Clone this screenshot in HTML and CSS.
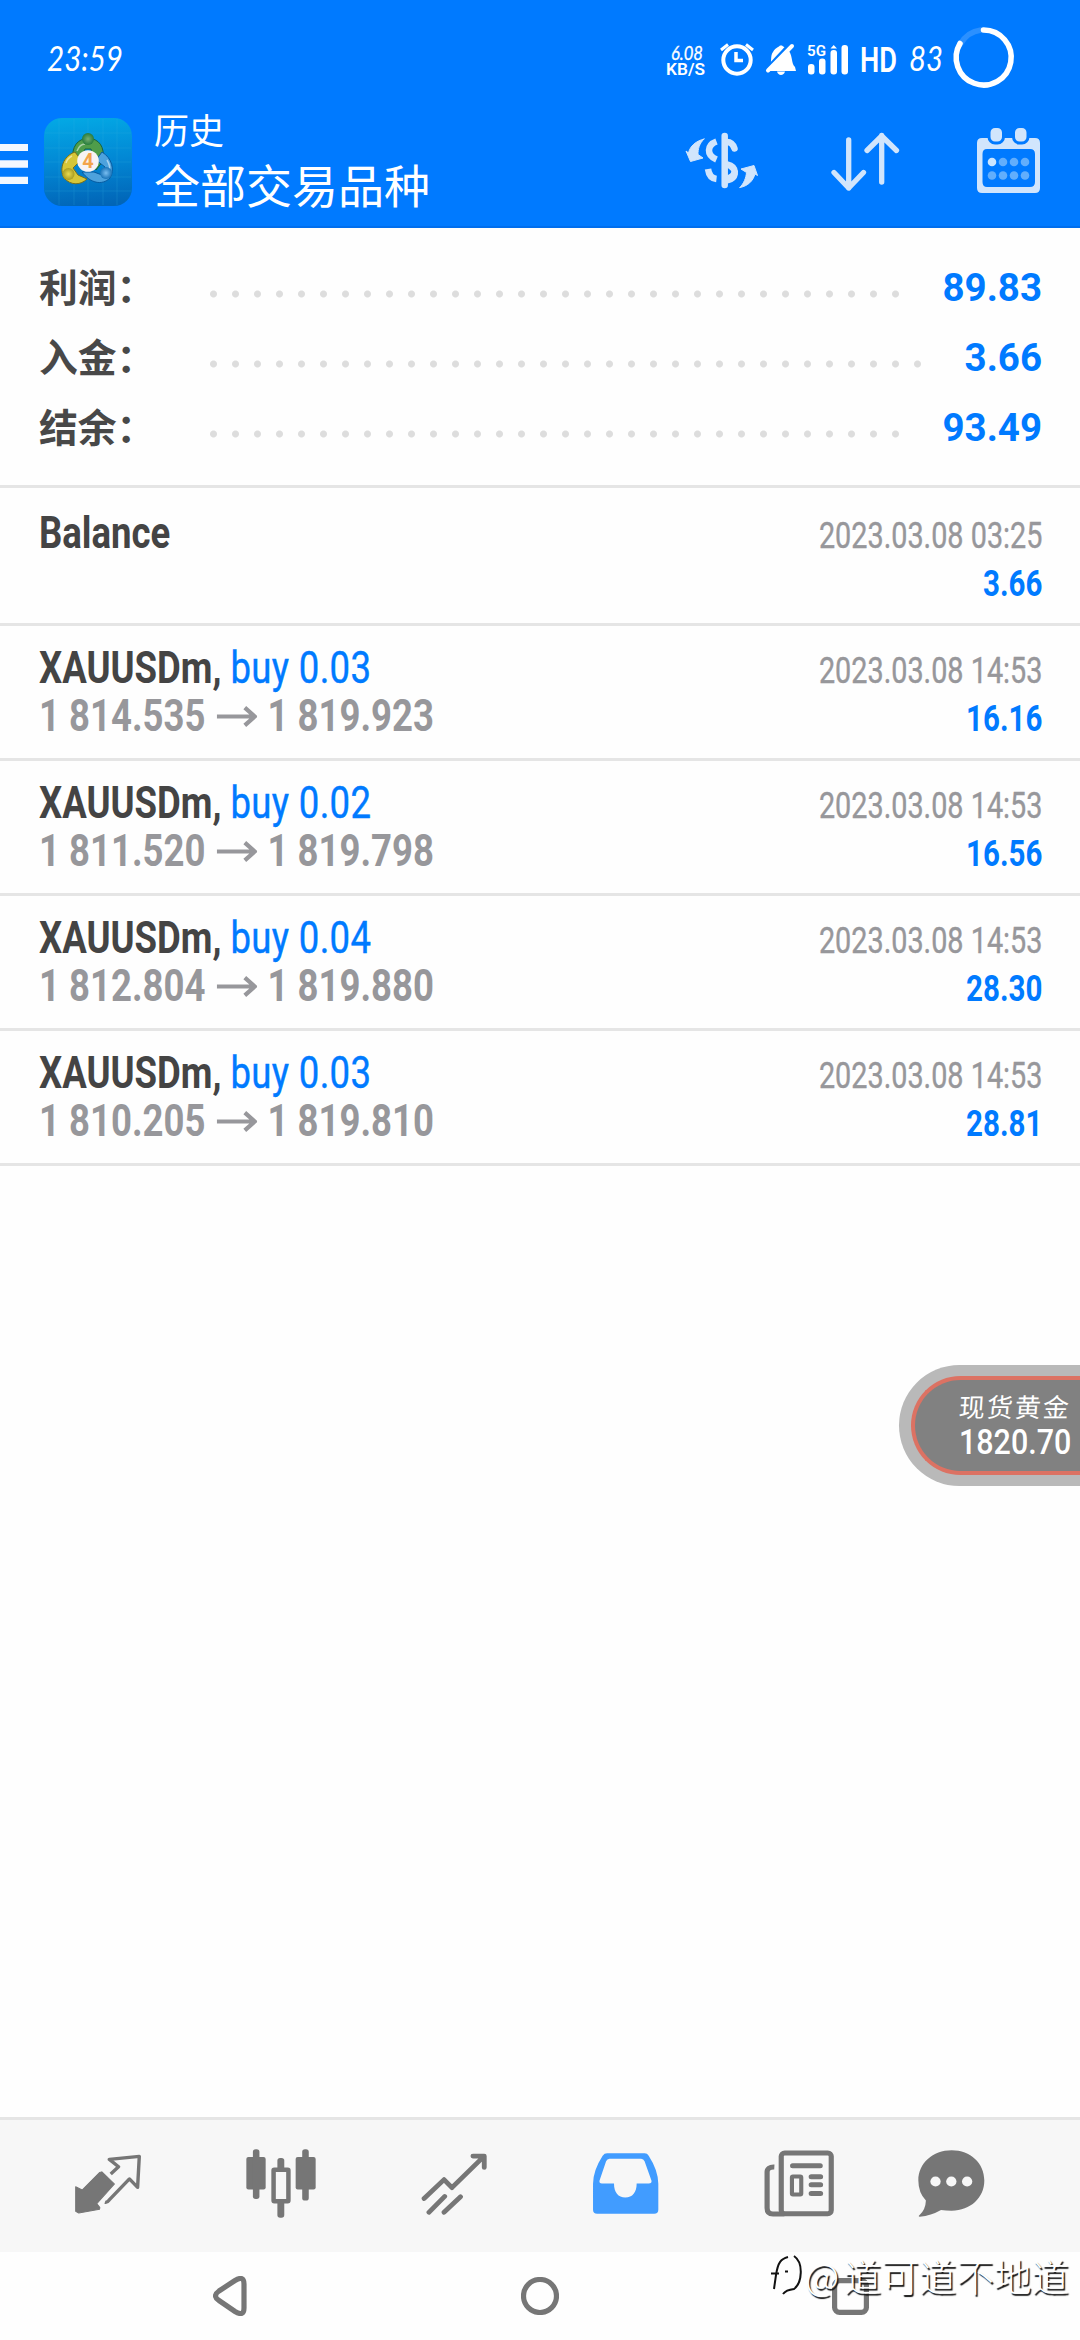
FILE: index.html
```html
<!DOCTYPE html>
<html lang="zh-CN">
<head>
<meta charset="utf-8">
<title>历史</title>
<link rel="stylesheet" href="styles.css">
</head>
<body>
<svg class="defs" width="0" height="0">
  <symbol id="arrow" viewBox="0 0 39 20" preserveAspectRatio="none"><path d="M0 10H37M27 1.500L36.500 10L27 18.500" fill="none" stroke="currentColor" stroke-width="4"/></symbol>
</svg>
<header class="top">
  <div class="status">
    <svg width="1080" height="100" viewBox="0 0 1080 100" fill="#fff">
      <g class="hand">
        <text x="47" y="71" font-size="35" textLength="76" lengthAdjust="spacingAndGlyphs">23:59</text>
        <text x="671" y="60" font-size="19" textLength="32" lengthAdjust="spacingAndGlyphs" stroke="#fff" stroke-width=".3">6.08</text>
        <text x="909" y="71" font-size="35" textLength="34" lengthAdjust="spacingAndGlyphs">83</text>
      </g>
      <g class="label">
        <text x="666" y="75" font-size="17" textLength="39" lengthAdjust="spacingAndGlyphs">KB/S</text>
        <text x="807" y="56" font-size="15" textLength="19" lengthAdjust="spacingAndGlyphs">5G</text>
        <text x="860" y="72" font-size="35" textLength="37" lengthAdjust="spacingAndGlyphs">HD</text>
      </g>
      <g fill="none" stroke="#fff" stroke-width="4">
        <circle cx="737" cy="60" r="13.700"/>
        <path d="M736 52V60.500H743" stroke-width="3.500"/>
        <path d="M721 50L728 44.500M753 50L746 44.500" stroke-width="3"/>
      </g>
      <path d="M770 66C772 62 770 56 773 52C776 47 779 47 780 45.500H782C783 47 787 48 789 51C793 57 791 63 795 67L796 71H768ZM777 71.500H785C784 76 778 76 777 71.500Z"/>
      <path d="M764 72L791 43" stroke="#007aff" stroke-width="4"/>
      <path d="M768 70.500L792 46" stroke="#fff" stroke-width="4" stroke-linecap="round"/>
      <rect x="808" y="64" width="6.500" height="10.500" rx="3"/><rect x="819" y="58.500" width="6.500" height="16" rx="3"/><rect x="830.500" y="50" width="6.500" height="24.500" rx="3"/><rect x="841.500" y="45" width="6.500" height="29.500" rx="3"/>
      <path d="M830.500 48.500L833.700 45L837 48.500Z"/>
      <g fill="none" stroke-width="5.500" stroke-linecap="round"><path d="M960.500 44A27.500 27.500 0 0 1 981 30" stroke="#2b90ff"/><path d="M983.500 30A27.500 27.500 0 1 1 960 43.500" stroke="#fff"/></g>
    </svg>
  </div>
  <div class="bar">
    <svg class="menu" width="28" height="40" viewBox="0 0 28 40" fill="#f3f8ff"><path d="M0 0H28V7H0ZM0 16.300H28V23.700H0ZM0 32.700H28V40H0Z"/></svg>
    <svg class="logo" width="88" height="88" viewBox="0 0 88 88">
      <defs>
        <linearGradient id="lg" x1=".45" y1="0" x2=".55" y2="1"><stop offset="0" stop-color="#03a7e4"/><stop offset=".5" stop-color="#0287d4"/><stop offset="1" stop-color="#0165b7"/></linearGradient>
        <radialGradient id="gr"><stop offset="0" stop-color="#77ae70"/><stop offset="1" stop-color="#267b3d"/></radialGradient>
        <radialGradient id="ye"><stop offset="0" stop-color="#eadb50"/><stop offset="1" stop-color="#a89c22"/></radialGradient>
        <radialGradient id="bl"><stop offset="0" stop-color="#79bdf0"/><stop offset="1" stop-color="#1973b8"/></radialGradient>
      </defs>
      <rect width="88" height="88" rx="18" fill="url(#lg)"/>
      <path d="M15 1V87M30 1V87M44 1V87M59 1V87M73 1V87M1 15H87M1 30H87M1 44H87M1 59H87M1 73H87" stroke="#39b6e3" stroke-width=".7" opacity=".3"/>
      <g stroke-width="1">
        <path d="M29 43C27 28 34 21 44 20C55 21 61 28 59 43L52 52L47 31H41L36 42Z" fill="#4f9d4a" stroke="#19623c"/>
        <path d="M31 34C19 38 15 51 20 60C27 68 37 67 43 61L34 57L29 50L37 42Z" fill="#d6c638" stroke="#776f1a"/>
        <path d="M58 34C68 40 71 52 66 60C58 68 46 65 38 54H50L58 57L61 49L52 42Z" fill="#4da2dd" stroke="#075ba1"/>
      </g>
      <path d="M33 33C35 28 38 26 41 26M22 45C23 41 26 39 28 38M63 42C66 47 66 50 65 52" fill="none" stroke="#fff" stroke-width="1.500" opacity=".5"/>
      <circle cx="44" cy="21" r="6" fill="url(#gr)"/><circle cx="24.500" cy="56" r="6" fill="url(#ye)"/><circle cx="62" cy="55" r="6" fill="url(#bl)"/>
      <circle cx="44" cy="43" r="10.800" fill="#f7f3f4"/>
      <text class="four" x="44" y="50" text-anchor="middle">4</text>
    </svg>
    <div class="titles"><div class="sub">历史</div><div class="main">全部交易品种</div></div>
    <svg class="actions" width="360" height="68" viewBox="682 126 360 68" fill="none" stroke="#d1e5fc" stroke-linecap="round" stroke-linejoin="round">
      <g stroke-width="6.500">
        <path d="M724.700 136V185"/><path d="M727 142C731 142 733 144 734.500 148.500M727 164.500C737 167 737 176 727 178.500M731 166.500C737 170 736 178 728 180"/>
        <path d="M716.500 141.500C707 145 706 155 716.500 159.500M708 169C709 176 712 178.500 716.500 179" stroke-linecap="butt"/>
      </g>
      <path d="M704 139C696 141 690 146 688.500 153L686 151L690.500 161.500L703 158L698 154.500C698 149 699 144 704 139ZM740 187.500C748 186 753 181 755 174L757.500 175.500L754 165.500L741 169L746.500 172.500C746 178 744 183 740 187.500Z" fill="#d1e5fc" stroke-width="1"/>
      <path d="M848.700 140V188M834 172.500L848.700 188L863.500 172.500M881.700 182V135.500M867 150.500L881.700 136L896.500 150.500" stroke-width="5.300"/>
      <path d="M982 138H1035Q1040 138 1040 143V188Q1040 193 1035 193H982Q977 193 977 188V143Q977 138 982 138ZM987 149Q982.500 149 982.500 154V182Q982.500 187 987 187H1030Q1035 187 1035 182V154Q1035 149 1030 149Z" fill="#d1e5fc" fill-rule="evenodd" stroke="none"/>
      <g fill="#d1e5fc" stroke="#007aff" stroke-width="3"><rect x="989" y="126.500" width="14.500" height="16.500" rx="6"/><rect x="1013.500" y="126.500" width="14.500" height="16.500" rx="6"/></g>
      <g stroke="none" fill="#62aefc"><circle cx="992" cy="162" r="4.300" fill="#cbe5ff"/><circle cx="1003" cy="162" r="4.300"/><circle cx="1014" cy="162" r="4.300"/><circle cx="1025" cy="162" r="4.300"/><circle cx="992" cy="175.500" r="4.300"/><circle cx="1003" cy="175.500" r="4.300"/><circle cx="1014" cy="175.500" r="4.300"/><circle cx="1025" cy="175.500" r="4.300"/></g>
    </svg>
  </div>
</header>
<section class="summary">
  <div class="total"><span class="name">利润：</span><span class="dots"></span><b>89.83</b></div>
  <div class="total"><span class="name">入金：</span><span class="dots long"></span><b>3.66</b></div>
  <div class="total"><span class="name">结余：</span><span class="dots"></span><b>93.49</b></div>
</section>
<main>
  <div class="deal first"><div class="left"><div><b>Balance</b></div></div><div class="right"><div class="date">2023.03.08 03:25</div><div class="profit">3.66</div></div></div>
  <div class="deal"><div class="left"><div><b>XAUUSDm,</b> <span>buy 0.03</span></div><div class="price">1 814.535<svg><use href="#arrow"/></svg>1 819.923</div></div><div class="right"><div class="date">2023.03.08 14:53</div><div class="profit">16.16</div></div></div>
  <div class="deal"><div class="left"><div><b>XAUUSDm,</b> <span>buy 0.02</span></div><div class="price">1 811.520<svg><use href="#arrow"/></svg>1 819.798</div></div><div class="right"><div class="date">2023.03.08 14:53</div><div class="profit">16.56</div></div></div>
  <div class="deal"><div class="left"><div><b>XAUUSDm,</b> <span>buy 0.04</span></div><div class="price">1 812.804<svg><use href="#arrow"/></svg>1 819.880</div></div><div class="right"><div class="date">2023.03.08 14:53</div><div class="profit">28.30</div></div></div>
  <div class="deal"><div class="left"><div><b>XAUUSDm,</b> <span>buy 0.03</span></div><div class="price">1 810.205<svg><use href="#arrow"/></svg>1 819.810</div></div><div class="right"><div class="date">2023.03.08 14:53</div><div class="profit">28.81</div></div></div>
</main>
<aside class="float"><div class="pill"><div class="metal">现货黄金</div><div class="quote">1820.70</div></div></aside>
<nav class="tabs">
  <svg width="66" height="60" viewBox="218 164 194 178" preserveAspectRatio="none"><path d="M297 217L334 253L282 311L291 323L290 328L229 339L220 334V261L239 271L290 219Z" fill="#767676" stroke="#767676" stroke-width="3" stroke-linejoin="round"/><path d="M323 223L346 202L319 180L407 171L402 263L378 238L318 301Q312 309 306 307" fill="none" stroke="#767676" stroke-width="10" stroke-linejoin="round"/></svg>
  <svg width="70" height="69" viewBox="715 149 203 206" preserveAspectRatio="none" fill="#767676"><rect x="716" y="173" width="56" height="97" rx="6"/><rect x="735" y="150" width="19" height="148" rx="8"/><rect x="859" y="173" width="58" height="97" rx="6"/><rect x="878" y="150" width="19" height="153" rx="8"/><rect x="806" y="176" width="20" height="178" rx="8"/><rect x="795" y="211" width="43" height="94" rx="2" fill="#f7f7f7" stroke="#767676" stroke-width="13"/></svg>
  <svg width="66" height="62" viewBox="1222 157 192 184" preserveAspectRatio="none" fill="none" stroke="#767676" stroke-width="14" stroke-linecap="round" stroke-linejoin="round"><path d="M1231 292L1289 236L1312 260L1405 167M1373 166H1406V200M1245 333L1291 286M1289 333L1337 287"/></svg>
  <svg width="67" height="61" viewBox="157 157 195 184" preserveAspectRatio="none"><path fill="#419cff" fill-rule="evenodd" d="M201 158H310Q318 158 322 165Q350 210 350 250V328Q350 340 338 340H172Q160 340 160 328V250Q160 210 188 165Q193 158 201 158ZM208 174Q201 174 198 182L179 240Q177 249 186 249H221C221 276 233 291 254 291S287 276 287 249H322Q332 249 330 240L310 182Q307 174 300 174Z"/></svg>
  <svg width="70" height="67" viewBox="656 149 203 200" preserveAspectRatio="none" fill="none" stroke="#767676" stroke-width="15"><rect x="706" y="158" width="145" height="181" rx="10"/><path d="M686 200Q665 199 665 215V322Q665 340 682 340H715"/><path d="M739 196H819M793 229H820M793 253H820M793 279H820" stroke-linecap="round"/><rect x="737" y="228" width="27" height="54" rx="3" stroke-width="12"/></svg>
  <svg width="67" height="67" viewBox="1102 149 195 200" preserveAspectRatio="none"><path d="M1200 150C1255 150 1295 189 1295 240S1255 330 1200 330Q1183 330 1169 328Q1140 345 1107 348Q1102 348 1106 344Q1124 328 1125 300Q1103 276 1103 240C1103 189 1145 150 1200 150Z" fill="#767676"/><g fill="#f7f7f7"><circle cx="1153" cy="243" r="15"/><circle cx="1199" cy="243" r="15"/><circle cx="1245" cy="243" r="15"/></g></svg>
</nav>
<footer class="system">
  <svg width="34" height="40" viewBox="213 2276 34 40"><path d="M235 2280.500Q244 2275 244 2284V2308Q244 2317 235 2311.500L219 2300.500Q212 2296 219 2291Z"/></svg>
  <svg width="38" height="38" viewBox="0 0 38 38"><circle cx="19" cy="19" r="16.500"/></svg>
  <svg width="37" height="37" viewBox="0 0 37 37"><rect x="2.600" y="2.600" width="31.800" height="31.800" rx="5"/></svg>
  <div class="watermark">
    <svg width="32" height="44" viewBox="770 2261 32 44"><path d="M774 2297L776 2283C778 2270 781 2267 788 2265M771 2281.500H779M785 2279.500H788M794 2264C804 2271 802 2291 794 2297Q786 2298 783 2302" fill="none" stroke="#111" stroke-width="2"/></svg>
    <span class="at">@</span><span>道可道不地道</span>
  </div>
</footer>
</body>
</html>
```
FILE: styles.css
```css
* { box-sizing: border-box; }
body { margin: 0; width: 1080px; height: 2340px; display: flex; flex-direction: column; background: #fefefe; font-family: Roboto, "Noto Sans CJK SC", sans-serif; overflow: hidden; position: relative; }
svg { display: block; flex: none; }
.defs { position: absolute; }
.top { height: 228px; background: #007aff; border-bottom: 2px solid #006eed; color: #fff; flex: none; }
.status { height: 100px; }
.hand { font-family: Lato, sans-serif; font-style: italic; }
.label { font-family: Roboto, sans-serif; font-weight: 600; }
.bar { display: flex; height: 126px; align-items: flex-start; }
.menu { margin-top: 44px; }
.logo { margin: 18px 0 0 16px; }
.four { font: 700 20px Roboto, sans-serif; fill: #f3a44b; }
.titles { margin: 6px 0 0 22px; flex: 1; font-family: "Noto Sans CJK SC", sans-serif; font-weight: 400; }
.sub { font-size: 35px; line-height: 46px; }
.main { font-size: 46px; line-height: 62px; }
.actions { margin: 26px 38px 0 0; }
.summary { height: 260px; padding: 25px 38px 0 39px; border-bottom: 3px solid #e5e5e5; flex: none; }
.total { display: flex; height: 70px; align-items: center; }
.name { width: 171px; font: 700 38.8px/70px "Noto Sans CJK SC", sans-serif; color: #484848; white-space: nowrap; margin-top: -6px; }
.dots { width: 704px; height: 8px; margin-top: 12px; background: radial-gradient(circle at 3.5px 4px, #ddd 3px, transparent 4px) 0 0 / 22px 8px repeat-x; }
.dots.long { width: 726px; }
.total b { margin-left: auto; font-size: 38.5px; line-height: 70px; color: #007aff; }
.deal { height: 135px; border-bottom: 3px solid #e5e5e5; padding: 18px 38px 0 39px; display: flex; justify-content: space-between; }
.deal.first { height: 138px; padding-top: 21px; }
.left { font-size: 44px; line-height: 48px; color: #444; transform: scaleX(.83); transform-origin: 0 0; white-space: nowrap; }
.left span { color: #007aff; letter-spacing: .4px; -webkit-text-stroke: .4px #007aff; }
.price { font-weight: 700; color: #97979b; display: flex; align-items: center; }
.price svg { width: 49px; height: 21px; margin: 0 12px 0 14px; }
.right { text-align: right; font-size: 36px; line-height: 48px; padding-top: 3px; white-space: nowrap; }
.date { color: #97979b; -webkit-text-stroke: .4px #97979b; transform: scaleX(.8); transform-origin: 100% 0; }
.profit { color: #007aff; font-weight: 700; transform: scaleX(.82); transform-origin: 100% 0; }
.float { position: absolute; left: 899px; top: 1365px; width: 181px; height: 121px; padding: 11px 0 11px 12px; border-radius: 61px 0 0 61px; background: #b9b9b9; overflow: hidden; }
.pill { height: 99px; border: 4px solid #dc7263; border-right: 0; border-radius: 50px 0 0 50px; background: #818181; color: #fff; padding: 10px 0 0 44px; white-space: nowrap; }
.metal { font: 400 26px/31px "Noto Sans CJK SC", sans-serif; letter-spacing: 2px; transform: skewX(-4deg); }
.quote { font-size: 35px; line-height: 44px; font-weight: 500; transform: scaleX(.87); transform-origin: 0 0; }
.tabs { margin-top: auto; height: 135px; flex: none; background: #f7f7f7; border-top: 3px solid #e5e5e5; display: flex; align-items: center; gap: 105px; padding: 0 0 5px 75px; }
.tabs svg:last-child { margin-left: -21px; }
.system { height: 88px; flex: none; display: flex; align-items: center; justify-content: space-between; padding: 0 211px 0 213px; position: relative; }
.system > svg { fill: none; stroke: #767676; stroke-width: 5.2; }
.watermark { position: absolute; left: 770px; top: -1px; display: flex; align-items: center; font: 300 37.5px/48px "Noto Sans CJK SC", sans-serif; color: #fff; text-shadow: 1.5px 1.5px 1px #111; white-space: nowrap; }
.watermark .at { width: 42px; padding-left: 3px; }
```
